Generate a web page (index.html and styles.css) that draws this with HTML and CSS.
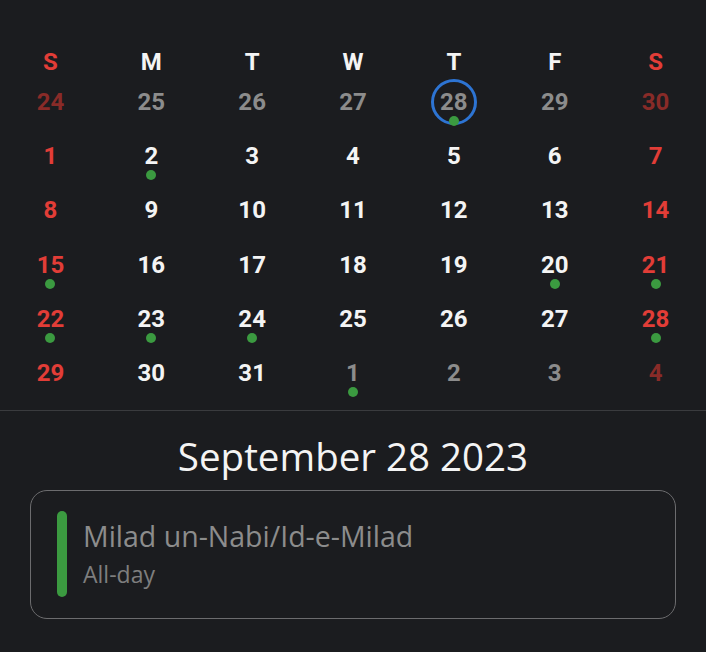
FILE: index.html
```html
<!DOCTYPE html>
<html>
<head>
<meta charset="utf-8">
<link rel="stylesheet" href="styles.css">
</head>
<body>
<div class="cal">
  <div class="week head">
    <span class="wd red">S</span><span class="wd">M</span><span class="wd">T</span><span class="wd">W</span><span class="wd">T</span><span class="wd">F</span><span class="wd red">S</span>
  </div>
  <div class="grid">
    <div class="cell"><span class="num dimred">24</span></div>
    <div class="cell"><span class="num gray">25</span></div>
    <div class="cell"><span class="num gray">26</span></div>
    <div class="cell"><span class="num gray">27</span></div>
    <div class="cell"><span class="num gray today">28</span><i class="dot on-ring"></i></div>
    <div class="cell"><span class="num gray">29</span></div>
    <div class="cell"><span class="num dimred">30</span></div>

    <div class="cell"><span class="num red">1</span></div>
    <div class="cell"><span class="num">2</span><i class="dot"></i></div>
    <div class="cell"><span class="num">3</span></div>
    <div class="cell"><span class="num">4</span></div>
    <div class="cell"><span class="num">5</span></div>
    <div class="cell"><span class="num">6</span></div>
    <div class="cell"><span class="num red">7</span></div>

    <div class="cell"><span class="num red">8</span></div>
    <div class="cell"><span class="num">9</span></div>
    <div class="cell"><span class="num">10</span></div>
    <div class="cell"><span class="num">11</span></div>
    <div class="cell"><span class="num">12</span></div>
    <div class="cell"><span class="num">13</span></div>
    <div class="cell"><span class="num red">14</span></div>

    <div class="cell"><span class="num red">15</span><i class="dot"></i></div>
    <div class="cell"><span class="num">16</span></div>
    <div class="cell"><span class="num">17</span></div>
    <div class="cell"><span class="num">18</span></div>
    <div class="cell"><span class="num">19</span></div>
    <div class="cell"><span class="num">20</span><i class="dot"></i></div>
    <div class="cell"><span class="num red">21</span><i class="dot"></i></div>

    <div class="cell"><span class="num red">22</span><i class="dot"></i></div>
    <div class="cell"><span class="num">23</span><i class="dot"></i></div>
    <div class="cell"><span class="num">24</span><i class="dot"></i></div>
    <div class="cell"><span class="num">25</span></div>
    <div class="cell"><span class="num">26</span></div>
    <div class="cell"><span class="num">27</span></div>
    <div class="cell"><span class="num red">28</span><i class="dot"></i></div>

    <div class="cell"><span class="num red">29</span></div>
    <div class="cell"><span class="num">30</span></div>
    <div class="cell"><span class="num">31</span></div>
    <div class="cell"><span class="num gray">1</span><i class="dot"></i></div>
    <div class="cell"><span class="num gray">2</span></div>
    <div class="cell"><span class="num gray">3</span></div>
    <div class="cell"><span class="num dimred">4</span></div>
  </div>
</div>
<div class="divider"></div>
<h1 class="day-title">September 28 2023</h1>
<div class="event">
  <div class="bar"></div>
  <div class="ev-text">
    <div class="ev-name">Milad un-Nabi/Id-e-Milad</div>
    <div class="ev-time">All-day</div>
  </div>
</div>
</body>
</html>
```

FILE: styles.css
```css
html, body {
  margin: 0;
  padding: 0;
  background: #1b1c1f;
  height: 100%;
}
body {
  font-family: Roboto, "Liberation Sans", sans-serif;
  color: #f4f4f4;
  overflow: hidden;
}
.cal {
  padding-top: 42px;
}
.week, .grid {
  display: grid;
  grid-template-columns: repeat(7, 1fr);
}
.wd {
  text-align: center;
  font-weight: 700;
  font-size: 24px;
  line-height: 40px;
  color: #f4f4f4;
}
.cell {
  height: 54.2px;
  display: flex;
  flex-direction: column;
  align-items: center;
}
.num {
  font-size: 24px;
  font-weight: 700;
  line-height: 40px;
  height: 40px;
  color: #f4f4f4;
}
.num.red, .wd.red { color: #e23d37; }
.num.dimred { color: #892b28; }
.num.gray { color: #8c8c8c; }
.num.today {
  width: 40px;
  height: 40px;
  line-height: 40px;
  text-align: center;
  border: 3px solid #2d74d3;
  border-radius: 50%;
  box-sizing: content-box;
  margin-top: -3px;
}
.dot {
  display: block;
  width: 10px;
  height: 10px;
  border-radius: 50%;
  background: #3b9a40;
  margin-top: -6px;
}
.dot.on-ring {
  margin-top: -9px;
}
.divider {
  height: 1px;
  background: #3a3b3e;
  margin-top: 3px;
}
.day-title {
  margin: 23px 0 12px;
  text-align: center;
  font-family: "Open Sans", Lato, sans-serif;
  font-weight: 400;
  font-size: 38.5px;
  line-height: 44px;
  color: #f4f4f4;
}
.event {
  margin: 0 30px;
  height: 129px;
  box-sizing: border-box;
  border: 1.5px solid #6c6c6e;
  border-radius: 17px;
  padding: 20px 26px;
  display: flex;
  gap: 16px;
}
.bar {
  width: 10px;
  height: 86px;
  border-radius: 5px;
  background: #3b9a40;
  flex: none;
}
.ev-text {
  padding-top: 7px;
  font-family: "Open Sans", Lato, sans-serif;
}
.ev-name {
  font-size: 28.5px;
  line-height: 36px;
  color: #8c8c8c;
}
.ev-time {
  margin-top: 6px;
  font-size: 23px;
  line-height: 28px;
  color: #7e7e7e;
}
```
